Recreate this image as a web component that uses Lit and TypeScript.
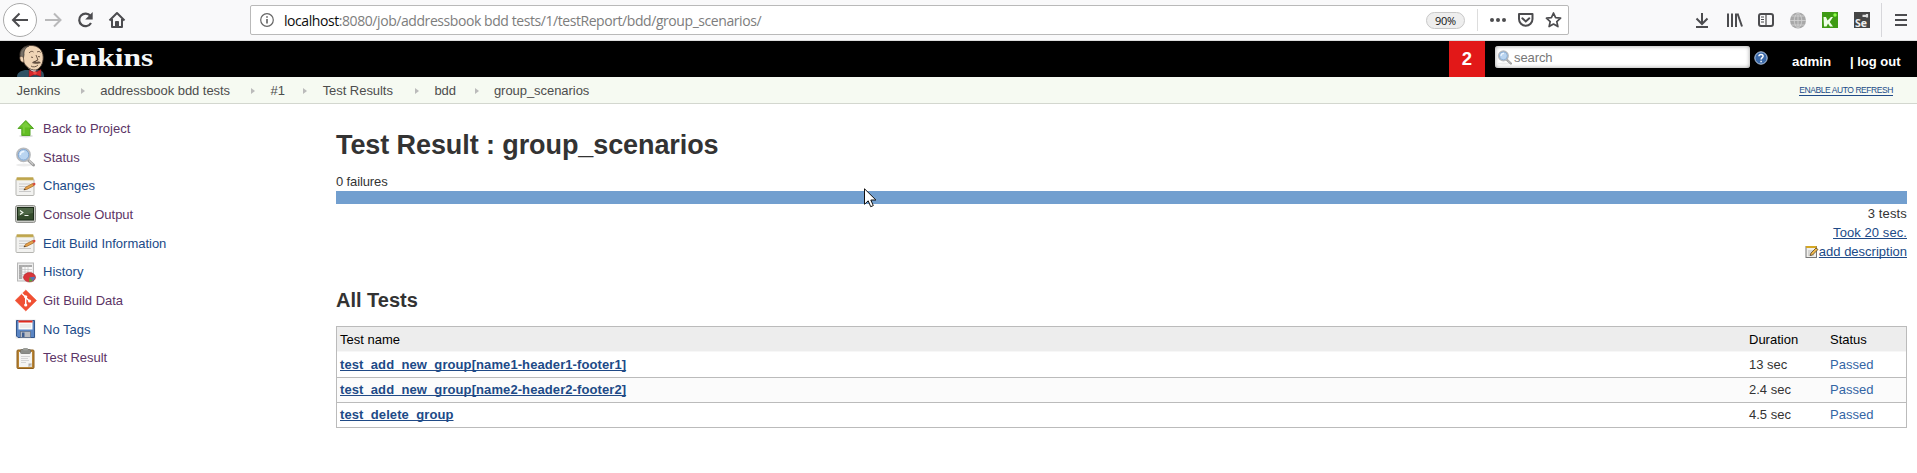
import { LitElement, html, css, svg } from "lit";
import { customElement, property } from "lit/decorators.js";

const notepad = svg`<rect x="1" y="3" width="18" height="16.500" rx="1" fill="#f2f2f0" stroke="#b5b5b1"/><rect x="1.500" y="1.500" width="17" height="2.800" fill="#c9b25e"/><path d="M3 1v2.500m2-2.500v2.500m2-2.500v2.500m2-2.500v2.500m2-2.500v2.500m2-2.500v2.500m2-2.500v2.500m2-2.500v2.500" stroke="#a98c2d" stroke-width=".7"/><path d="M4 8h11M4 10.500h8M4 13h5M4 15.500h12" stroke="#c9c9c9"/><path d="M9 13.800l1.500-2.500 7-3.800 1.300 2.300-7 3.600z" fill="#e6a24a" stroke="#9c6428" stroke-width=".7"/><path d="M17.500 7.500l1.800-.8c1 0 1.600 1.500.8 2.200l-1.300.9z" fill="#d8483c"/><path d="M8.600 14.200l1.300-1.400.8 1z" fill="#333"/>`;

const icons: Record<string, unknown> = {
  up: svg`<ellipse cx="11" cy="18" rx="7" ry="1.500" fill="#ddd"/><path d="M10.800 2.500l7.700 8h-3.500v7H6.800v-7H3z" fill="#62bd22" stroke="#55a626" stroke-linejoin="round"/><path d="M10.800 4l5 5.500H9.800v6h-2v-7H5.500z" fill="#8bd64f" opacity=".6"/>`,
  search: svg`<ellipse cx="9" cy="18" rx="8" ry="1.500" fill="#ececec"/><path d="M12.500 12.500l6 5.500" stroke="#999" stroke-width="3" stroke-linecap="round"/><path d="M14 13.500l4.200 4" stroke="#ccc" stroke-width="1.200"/><circle cx="8.500" cy="7.800" r="6.500" fill="#b9d4f0" stroke="#b8babd" stroke-width="1.800"/><circle cx="8.500" cy="7.800" r="5.300" fill="none" stroke="#7fa5d1"/><path d="M5.300 8c0-2 1.500-3.500 4-3.500" fill="none" stroke="#eef6ff" stroke-width="1.500"/>`,
  notepad,
  console: svg`<rect x=".5" y="1.500" width="20" height="17" rx="2" fill="#c9cac6" stroke="#92938f"/><rect x="2.500" y="3.500" width="16" height="12.500" fill="#344b2c" stroke="#1b2b18"/><path d="M3 4h15v5L3 12z" fill="#587150" opacity=".7"/><path d="M5 6.500l2.800 2L5 10.500M9.500 11.500h4" fill="none" stroke="#f4f8f0" stroke-width="1.200"/>`,
  history: svg`<rect x="2.500" y="1" width="16" height="18" fill="#eee" stroke="#b7b7b7"/><path d="M4 3h13v14H4z" fill="#fafafa"/><path d="M4 3h3v14H4zM4 3h13v2H4z" fill="#aaa"/><path d="M4 7.500h13M4 10h13M4 12.500h10M4 15h10M7 3v14M10 3v14M13 3v14" stroke="#bbb" stroke-width=".6"/><ellipse cx="14.500" cy="15.300" rx="6" ry="4.700" fill="#d9363a" stroke="#a92027" stroke-width=".6"/><path d="M14.500 15.300l5.500-.5c0 2-1 3.500-2.500 4.200z" fill="#5678b5"/><path d="M14.500 15.300l3 3.700c-1 .7-2.500.8-3.500.7z" fill="#57a639"/>`,
  git: svg`<path d="M10.800 0L21.500 10.500 10.800 21 .2 10.500z" fill="#f05033" stroke="#f05033" stroke-linejoin="round" stroke-width=".5"/><path d="M7 3.500l3.700 3.700v8.300M10.700 7.500l3.800 3.500" fill="none" stroke="#fff" stroke-width="1.400"/><circle cx="10.700" cy="6.800" r="1.600" fill="#fff"/><circle cx="10.700" cy="15" r="1.600" fill="#fff"/><circle cx="14.600" cy="11" r="1.600" fill="#fff"/>`,
  floppy: svg`<rect x=".5" y=".5" width="20" height="19" fill="#e9e9e9"/><path d="M1.500 1.500h18v17H3l-1.500-1.500z" fill="#5b86c4" stroke="#33568b"/><rect x="3.500" y="1.500" width="14" height="9" fill="#fafafa"/><rect x="3.500" y="1.500" width="14" height="2" fill="#e02a1e"/><path d="M5 6h11M5 8h11" stroke="#ddd"/><rect x="5.500" y="12.500" width="10" height="6" fill="#b9bcc2" stroke="#606e86" stroke-width=".7"/><rect x="7" y="13.500" width="2.500" height="4.500" fill="#3f5e91"/>`,
  clipboard: svg`<rect x="2" y="2" width="17" height="18.500" rx="1" fill="#b98434" stroke="#8c5e1c"/><path d="M4 4h13v11.500L13.500 19H4z" fill="#f4f4f2"/><path d="M17 15.500L13.500 19v-3.500z" fill="#aaa"/><path d="M13.500 19l3.500-3.500V19z" fill="#d9d9d4"/><rect x="5.500" y="1.500" width="10" height="4" rx="1" fill="#8b8d88" stroke="#6a6b67" stroke-width=".7"/><rect x="8" y="0" width="5" height="2.500" rx="1" fill="#9b9d98"/><path d="M6 8.500h9M6 10.500h7M6 12.500h8M6 14.500h5" stroke="#ccc" stroke-width=".8"/>`,
};

@customElement("side-task")
class SideTask extends LitElement {
  @property() icon = "up";
  @property() label = "";
  @property({ type: Boolean }) visited = false;
  static styles = css`
    :host { display: flex; align-items: center; height: 28.700px; }
    svg { width: 21px; height: 21px; flex: none; margin-right: 7px; overflow: visible; }
    a { color: #204a87; font-size: 13px; line-height: 16px; letter-spacing: -0.010px; white-space: nowrap; }
    .visited { color: #5c3566; }
  `;
  render() {
    return html`<svg viewBox="0 0 21 21">${icons[this.icon]}</svg><a class=${this.visited ? "visited" : ""}>${this.label}</a>`;
  }
}

@customElement("browser-bar")
class BrowserBar extends LitElement {
  static styles = css`
    :host { display: flex; box-sizing: border-box; height: 41px; background: #f9f9fa; border-bottom: 1px solid #ddd; font-family: "Open Sans", "Noto Sans", sans-serif; }
    svg { display: block; flex: none; fill: none; stroke: #4c4c4f; stroke-width: 2; overflow: visible; }
    .nav { width: 250px; }
    .url { box-sizing: border-box; width: 1319px; height: 30px; margin-top: 5px; border: 1px solid #b9b9b9; border-radius: 2px; background: #fff; display: flex; align-items: center; }
    .info { margin-left: 9px; }
    .addr { margin-left: 10px; padding-top: 2px; font-size: 14px; line-height: 20px; color: #7d7d7d; white-space: nowrap; flex: 1; letter-spacing: -0.430px; }
    .addr b { font-weight: 400; color: #0c0c0d; }
    .zoom { box-sizing: border-box; width: 39px; height: 17px; border: 1px solid #c8c8c8; border-radius: 9px; background: #eee; font-size: 11px; line-height: 16px; text-align: center; color: #111; letter-spacing: -0.300px; }
    .acts { margin-left: 11px; margin-right: 6px; }
    .tools { margin-left: auto; }
    text { font: 700 10.500px "Open Sans", sans-serif; fill: #eee; stroke: none; }
  `;
  render() {
    return html`
      <svg class="nav" width="250" height="40" viewBox="0 0 250 40">
        <circle cx="20" cy="20" r="16.500" fill="#fff" stroke="#aaa" stroke-width="1"/>
        <path d="M28 20H13.500M19.500 13.500L13 20l6.500 6.500"/>
        <path d="M45 20h15M54 13.500l6.500 6.500-6.500 6.500" stroke="#b9b9ba"/>
        <path d="M90.500 16A6.300 6.300 0 1 0 91 23" stroke-width="2.200"/><path d="M92.700 12v7.500h-7.500z" fill="#4c4c4f" stroke="none"/>
        <path d="M109.500 20.500L117 13l7.500 7.500M112 19v8h10v-8" stroke-linejoin="round"/><path d="M115.500 27v-5.500h3V27z" fill="#4c4c4f" stroke-width="1"/>
      </svg>
      <div class="url">
        <svg class="info" width="14" height="14" viewBox="0 0 14 14"><circle cx="7" cy="7" r="6.300" stroke="#666" stroke-width="1.200"/><path d="M7 6v4.500M7 3.300v1.500" stroke="#555" stroke-width="1.500"/></svg>
        <div class="addr"><b>localhost</b>:8080/job/addressbook bdd tests/1/testReport/bdd/group_scenarios/</div>
        <div class="zoom">90%</div>
        <svg class="acts" width="86" height="28" viewBox="0 0 86 28">
          <path d="M1.500 3v22" stroke="#ddd" stroke-width="1"/>
          <g fill="#4c4c4f" stroke="none"><circle cx="16" cy="14" r="2"/><circle cx="22" cy="14" r="2"/><circle cx="28" cy="14" r="2"/></g>
          <path d="M43 8h13.500v5a6.750 6.750 0 0 1-13.500 0z" stroke-linejoin="round"/><path d="M46.300 12.300l3.500 3.200 3.500-3.200" stroke-linecap="round"/>
          <path d="M77.500 7l2.100 4.700 5 .5-3.800 3.400 1.100 5-4.400-2.600-4.400 2.600 1.100-5-3.800-3.400 5-.5z" stroke-linejoin="round" stroke-width="1.700"/>
        </svg>
      </div>
      <svg class="tools" width="227" height="40" viewBox="1690 0 227 40">
        <path d="M1702 13v11M1696.500 18.500l5.500 5.500 5.500-5.500M1696 27h12"/>
        <path d="M1728 13.500v13.500M1732 13.500v13.500M1736 13.500v13.500M1737.500 13.500l4.500 13"/>
        <rect x="1759" y="14" width="14" height="12" rx="2"/><path d="M1766 14v12M1761 17h3M1761 19.500h3M1761 22h3" stroke-width="1.200"/>
        <circle cx="1798" cy="20.500" r="8" fill="#a8a8a8" stroke="none"/><path d="M1790 20.500h16M1791.500 16h13M1791.500 25h13M1798 12.500v16M1798 12.500c-5 4-5 12 0 16M1798 12.500c5 4 5 12 0 16" stroke="#d6d6d6" stroke-width=".8"/>
        <rect x="1822" y="12" width="16" height="16" fill="#3f9b14" stroke="none"/><path d="M1823.500 17h2.500l1.500 3.500 3.500-3.500h2l-3.300 5 3.300 4.500h-3l-2-3-1.500 3h-2.500z" fill="#f0ffe8" stroke="none"/><circle cx="1835" cy="15" r="1.700" fill="#8cff48" stroke="none"/>
        <rect x="1854" y="12" width="16" height="16" fill="#454545" stroke="none"/><text x="1855" y="26.500">Se</text><path d="M1862.500 15.800h3.800M1867 14v3.500" stroke="#ddd" stroke-width="2.200"/>
        <path d="M1881.500 3v34" stroke="#d7d7db" stroke-width="1"/>
        <path d="M1895 15h12M1895 20h12M1895 25h12"/>
      </svg>`;
  }
}

@customElement("app-root")
class AppRoot extends LitElement {
  static styles = css`
    :host { display: block; position: relative; width: 1917px; height: 473px; overflow: hidden; background: #fff; color: #333; font-family: "Liberation Sans", Arial, sans-serif; font-size: 13px; line-height: 16px; }
    svg { display: block; flex: none; }
    .header { display: flex; height: 36px; background: #000; color: #fff; }
    .butler { margin-left: 16px; }
    .brand { margin-left: 5px; font: 700 26px/34px "Liberation Serif", Georgia, serif; flex: 1; color: #f4f7f7; }
    .brand span { display: inline-block; transform: scaleX(1.210); transform-origin: 0 50%; }
    .count { width: 36px; background: #e21818; text-align: center; font-size: 18.500px; line-height: 36px; font-weight: 700; }
    .search { box-sizing: border-box; width: 255px; height: 22px; margin: 5px 0 0 10px; padding-left: 2px; border-radius: 3px; background: #fff; box-shadow: inset 0 0 4px #999; display: flex; align-items: center; color: #777; gap: 2px; }
    .search span { padding-top: 2px; letter-spacing: -0.100px; }
    .help { margin: 10px 0 0 4px; }
    .user { margin: 13px 0 0 24px; font-weight: 700; font-size: 13.300px; white-space: pre; width: 58px; }
    .logout { margin: 13px 0 0; font-weight: 700; font-size: 13px; white-space: nowrap; width: 67px; }
    .crumbs { display: flex; box-sizing: border-box; height: 27px; padding: 1px 24px 0 16.500px; align-items: center; background: #f6faf2; border-bottom: 1px solid #d3d7cf; color: #4d4d4d; letter-spacing: -0.050px; white-space: nowrap; }
    .crumbs i { width: 4px; margin-right: 15.400px; height: 0; border: solid transparent; border-width: 3.500px 0 3.500px 4px; border-left-color: #bbb; box-sizing: border-box; }
    .refresh { margin-left: auto; font-size: 8.500px; line-height: 9px; color: #204a87; border-bottom: 1px solid #204a87; letter-spacing: -0.430px; margin-top: 1px; }
    .page { display: flex; }
    .side { width: 320px; box-sizing: border-box; padding: 10.500px 0 0 15px; }
    .main { flex: 1; padding: 0 10px 0 16px; }
    h1 { margin: 25px 0 0; font-size: 27px; line-height: 32px; letter-spacing: -0.090px; }
    .fail { margin-top: 13px; letter-spacing: -0.120px; }
    .bar { height: 13px; margin-top: 1px; background: #729fcf; }
    .right { display: flex; flex-direction: column; align-items: flex-end; }
    .right > * { height: 19px; line-height: 19px; display: flex; align-items: center; }
    .right > .total { letter-spacing: 0.150px; }
    .right > .took { letter-spacing: 0.080px; }
    u { color: #204a87; text-decoration-skip-ink: none; }
    h2 { margin: 27px 0 0; font-size: 20px; line-height: 24px; }
    .table { margin-top: 14px; border: 1px solid #bbb; }
    .row { display: grid; grid-template-columns: 1fr 81px 76px; height: 24px; line-height: 23px; border-top: 1px solid #bbb; padding-left: 3px; }
    .row.head { border: 0; background: #ededed; color: #000; border-bottom: 1px solid #f7f7f7; line-height: 25px; }
    .row.head + .row { border-top: 0; height: 25px; line-height: 25px; }
    .row.alt { background: #fbfbfb; }
    .row u { font-weight: 700; letter-spacing: 0.090px; }
    .pass { color: #3465a4; }
    .cursor { position: absolute; left: 864px; top: 188px; }
  `;
  render() {
    const task = (icon: string, label: string, visited = false) => html`<side-task .icon=${icon} .label=${label} .visited=${visited}></side-task>`;
    const rows = [
      ["test_add_new_group[name1-header1-footer1]", "13 sec"],
      ["test_add_new_group[name2-header2-footer2]", "2.4 sec"],
      ["test_delete_group", "4.5 sec"],
    ];
    const crumbs: [string, number][] = [["Jenkins", 64.4], ["addressbook bdd tests", 150.8], ["#1", 32.8], ["Test Results", 92.4], ["bdd", 40.1], ["group_scenarios", 110]];
    return html`
      <browser-bar></browser-bar>
      <div class="header">
        <svg class="butler" width="29" height="36" viewBox="0 0 29 36">
          <path d="M1 36c0-4 3-6 8-7l13 0c4 0 6 2 6 7z" fill="#2e5164"/>
          <path d="M12 27l6 5 4-5-2-4h-8z" fill="#eee"/>
          <path d="M5 19C2 11 6 5 14 4.500c8-.5 13 4.500 13.200 11.500.2 7-3.200 12-7.500 13C14 29.500 9 25 7.500 20.500z" fill="#efd4b5" stroke="#4a3a30" stroke-width=".9"/>
          <path d="M5 18C2.500 12 5 6 13 4.800 9 7 7.500 10 8 13.500L7 20z" fill="#777067" stroke="#292624" stroke-width=".7"/>
          <path d="M4 18c-1-3 3-4 3.500-.5L8 21c-2 .5-3.500-.5-4-3z" fill="#efd4b5" stroke="#5b4638" stroke-width=".7"/>
          <path d="M13 12c1.500-2 3.500-2 4.500-1M21 11c1.500-1 3-.5 3.500.5M15 16l2 .5M22 15.500l2 .3M20 14l2 5-2.500.8M15 25c2 1.500 5 1 7-1" fill="none" stroke="#4d382b" stroke-width=".8"/>
          <path d="M16 22c2-3 4-2 5-1 2-1 3 0 4 1-2 .8-7 1-9 0z" fill="#655142"/>
          <path d="M13 29l6 2.500 6-3v7l-6-2-6 2.500z" fill="#d7282c" stroke="#70191b" stroke-width=".5"/><circle cx="19" cy="32" r="1.800" fill="#f04b43"/>
        </svg>
        <div class="brand"><span>Jenkins</span></div>
        <div class="count">2</div>
        <div class="search">
          <svg width="15" height="15" viewBox="0 0 20 20">${icons.search}</svg><span>search</span>
        </div>
        <svg class="help" width="14" height="14" viewBox="0 0 14 14"><circle cx="7" cy="7" r="6.200" fill="#3b69a8" stroke="#b9cce6"/><path d="M4.900 5.300c.2-2.600 4.300-2.400 4.200 0C9 6.700 7.200 6.700 7.100 8.500M7.100 9.700v1.500" fill="none" stroke="#fff" stroke-width="1.500"/></svg>
        <div class="user">admin</div><div class="logout"><span>| </span>log out</div>
      </div>
      <div class="crumbs">
        ${crumbs.map(([c, w], n) => html`${n ? html`<i></i>` : ""}<span style="width:${w}px">${c}</span>`)}
        <span class="refresh">ENABLE AUTO REFRESH</span>
      </div>
      <div class="page">
        <div class="side">
          ${task("up", "Back to Project", true)}
          ${task("search", "Status", true)}
          ${task("notepad", "Changes")}
          ${task("console", "Console Output", true)}
          ${task("notepad", "Edit Build Information")}
          ${task("history", "History")}
          ${task("git", "Git Build Data", true)}
          ${task("floppy", "No Tags")}
          ${task("clipboard", "Test Result", true)}
        </div>
        <div class="main">
          <h1>Test Result : group_scenarios</h1>
          <div class="fail">0 failures</div>
          <div class="bar"></div>
          <div class="right">
            <span class="total">3 tests</span>
            <span class="took"><u>Took 20 sec.</u></span>
            <span><svg width="14" height="14" viewBox="0 0 14 14"><rect x="1" y="1.500" width="10.500" height="11" fill="#f1f0ec" stroke="#777"/><path d="M1 2h10.500" stroke="#d5a724" stroke-width="2"/><path d="M3 6h6M3 8h4M3 10h6" stroke="#bbb"/><path d="M5 10.500l1-2.500 5-5 2 1.500-5.500 5.500z" fill="#efb84a" stroke="#5c4524" stroke-width=".8"/></svg><u>add description</u></span>
          </div>
          <h2>All Tests</h2>
          <div class="table">
            <div class="row head"><span>Test name</span><span>Duration</span><span>Status</span></div>
            ${rows.map((r, n) => html`<div class="row ${n === 1 ? "alt" : ""}"><span><u>${r[0]}</u></span><span>${r[1]}</span><span class="pass">Passed</span></div>`)}
          </div>
        </div>
      </div>
      <svg class="cursor" width="13" height="20" viewBox="0 0 13 20"><path d="M.5.800v15.500l3.700-3.500 2.500 5.900 2.600-1.100-2.500-5.600h5.100z" fill="#fff" stroke="#111"/></svg>`;
  }
}
